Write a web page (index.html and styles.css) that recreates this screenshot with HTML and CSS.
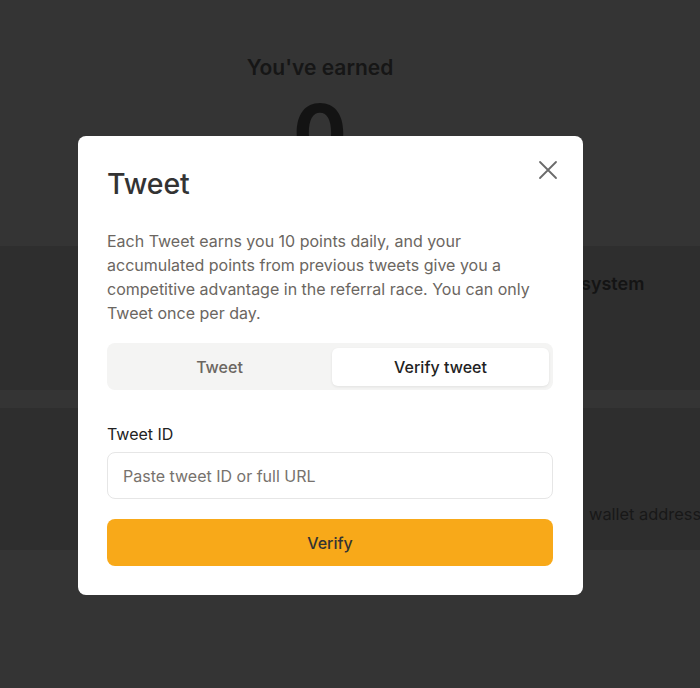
FILE: index.html
```html
<!DOCTYPE html>
<html lang="en">
<head>
<meta charset="utf-8">
<title>Tweet</title>
<link rel="stylesheet" href="styles.css">
</head>
<body>
<main class="page">
  <section class="earned">
    <h2 class="earned-title">You've earned</h2>
    <div class="earned-value">0</div>
  </section>
  <section class="panel panel-one">
    <div class="panel-inner panel-inner-one">
      <h3 class="panel-title">system</h3>
    </div>
  </section>
  <section class="panel panel-two">
    <div class="panel-inner panel-inner-two">
      <p class="panel-text">wallet address</p>
    </div>
  </section>
</main>

<div class="overlay">
  <div class="modal" role="dialog" aria-labelledby="modal-title">
    <button class="close" aria-label="Close">
      <svg width="20" height="20" viewBox="0 0 20 20" fill="none" stroke="#6a6a6a" stroke-width="1.8" stroke-linecap="round"><path d="M2 2L18 18M18 2L2 18"/></svg>
    </button>
    <h1 class="modal-title" id="modal-title">Tweet</h1>
    <p class="modal-text">Each Tweet earns you 10 points daily, and your accumulated points from previous tweets give you a competitive advantage in the referral race. You can only Tweet once per day.</p>
    <div class="tabs">
      <button class="tab">Tweet</button>
      <button class="tab tab-active">Verify tweet</button>
    </div>
    <label class="field-label" for="tweet-id">Tweet ID</label>
    <input class="field-input" id="tweet-id" type="text" placeholder="Paste tweet ID or full URL">
    <button class="primary">Verify</button>
  </div>
</div>
</body>
</html>
```

FILE: styles.css
```css
* { box-sizing: border-box; }
html, body { margin: 0; padding: 0; }
body {
  background: #343434;
  font-family: Inter, "Noto Sans", sans-serif;
  color: #151515;
  min-height: 688px;
  overflow: hidden;
}
.page { display: flex; flex-direction: column; }
.earned {
  display: flex;
  flex-direction: column;
  align-items: center;
  padding: 56px 60px 0 0;
  height: 246px;
}
.earned-title {
  margin: 0;
  font-size: 21px;
  line-height: 24px;
  font-weight: 600;
  color: #161616;
}
.earned-value {
  margin-top: 8px;
  font-size: 80px;
  line-height: 90px;
  font-weight: 700;
  color: #131313;
}
.panel { background: #2e2e2e; overflow: hidden; }
.panel-one { height: 144px; }
.panel-two { height: 142px; margin-top: 18px; }
.panel-inner-one { padding-left: 581px; }
.panel-inner-two { padding-left: 589px; }
.panel-title {
  margin: 26px 0 0;
  font-size: 18px;
  line-height: 24px;
  font-weight: 600;
  color: #141414;
  white-space: nowrap;
}
.panel-text {
  margin: 94px 0 0;
  font-size: 16.4px;
  line-height: 24px;
  color: #181818;
  white-space: nowrap;
}

.overlay {
  position: fixed;
  inset: 0;
}
.modal {
  position: absolute;
  top: 136px;
  left: 78px;
  width: 505px;
  background: #fff;
  border-radius: 8px;
  padding: 32px 30px 29px 29px;
  display: flex;
  flex-direction: column;
}
.close {
  position: absolute;
  top: 22px;
  right: 23px;
  width: 24px;
  height: 24px;
  padding: 2px;
  border: 0;
  background: none;
  display: flex;
  align-items: center;
  justify-content: center;
}
.modal-title {
  margin: 0;
  font-size: 28.5px;
  line-height: 32px;
  font-weight: 500;
  color: #333;
  letter-spacing: -0.1px;
}
.modal-text {
  margin: 29px 0 18px;
  font-size: 16px;
  line-height: 24px;
  color: #6b6661;
}
.tabs {
  display: grid;
  grid-template-columns: 1fr 1fr;
  gap: 4px;
  height: 47px;
  padding: 5px 4px 4px 4px;
  background: #f4f4f3;
  border-radius: 8px;
}
.tab {
  border: 0;
  background: transparent;
  border-radius: 6px;
  font-family: inherit;
  font-size: 16px;
  font-weight: 500;
  color: #6b6661;
}
.tab-active {
  background: #fff;
  color: #222;
  box-shadow: 0 1px 3px rgba(0,0,0,0.08);
}
.field-label {
  margin-top: 32px;
  font-size: 16px;
  line-height: 24px;
  font-weight: 400;
  color: #222;
}
.field-input {
  margin-top: 6px;
  height: 47px;
  border: 1px solid #e6e6e6;
  border-radius: 8px;
  padding: 0 15px;
  font-family: inherit;
  font-size: 16px;
  color: #222;
  outline: none;
}
.field-input::placeholder { color: #77726d; }
.primary {
  margin-top: 20px;
  height: 47px;
  border: 0;
  border-radius: 8px;
  background: #f8a919;
  font-family: inherit;
  font-size: 16px;
  font-weight: 500;
  color: #333;
}
```
